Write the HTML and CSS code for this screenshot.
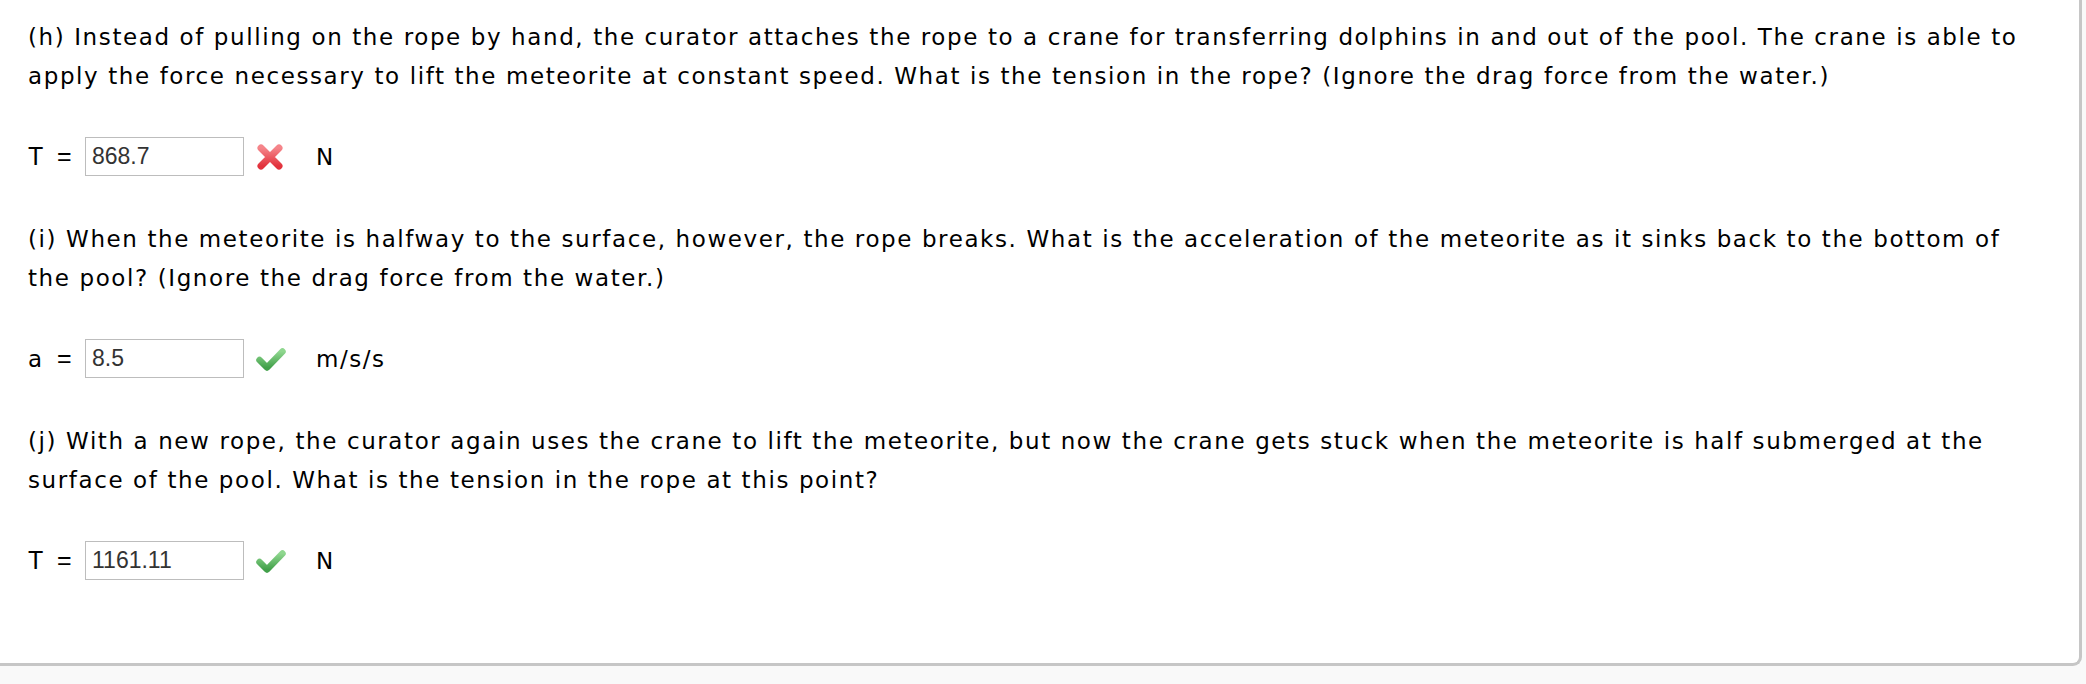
FILE: index.html
```html
<!DOCTYPE html>
<html>
<head>
<meta charset="utf-8">
<link rel="stylesheet" href="styles.css">
</head>
<body>
<div class="card">
  <p class="question">(h) Instead of pulling on the rope by hand, the curator attaches the rope to a crane for transferring dolphins in and out of the pool. The crane is able to apply the force necessary to lift the meteorite at constant speed. What is the tension in the rope? (Ignore the drag force from the water.)</p>
  <div class="answer-row">
    <span class="var">T</span><span class="eq">=</span>
    <span class="field">868.7</span>
    <span class="mark">
      <svg width="30" height="28" viewBox="0 0 30 28">
        <defs>
          <linearGradient id="gx" x1="0" y1="0" x2="0" y2="1">
            <stop offset="0" stop-color="#f5858a"/>
            <stop offset="1" stop-color="#e2323c"/>
          </linearGradient>
        </defs>
        <path d="M6 5 L24 23 M24 5 L6 23" stroke="url(#gx)" stroke-width="7" stroke-linecap="round" fill="none"/>
      </svg>
    </span>
    <span class="unit">N</span>
  </div>

  <p class="question">(i) When the meteorite is halfway to the surface, however, the rope breaks. What is the acceleration of the meteorite as it sinks back to the bottom of the pool? (Ignore the drag force from the water.)</p>
  <div class="answer-row">
    <span class="var var-text">a</span><span class="eq">=</span>
    <span class="field">8.5</span>
    <span class="mark">
      <svg width="32" height="28" viewBox="0 0 32 28">
        <defs>
          <linearGradient id="gc1" x1="0" y1="0" x2="0" y2="1">
            <stop offset="0" stop-color="#8fd78f"/>
            <stop offset="1" stop-color="#42a04a"/>
          </linearGradient>
        </defs>
        <path d="M4.5 15 L12 22.5 L27.5 6.5" stroke="url(#gc1)" stroke-width="6.5" stroke-linecap="round" stroke-linejoin="round" fill="none"/>
      </svg>
    </span>
    <span class="unit">m/s/s</span>
  </div>

  <p class="question">(j) With a new rope, the curator again uses the crane to lift the meteorite, but now the crane gets stuck when the meteorite is half submerged at the surface of the pool. What is the tension in the rope at this point?</p>
  <div class="answer-row last">
    <span class="var">T</span><span class="eq">=</span>
    <span class="field">1161.11</span>
    <span class="mark">
      <svg width="32" height="28" viewBox="0 0 32 28">
        <defs>
          <linearGradient id="gc2" x1="0" y1="0" x2="0" y2="1">
            <stop offset="0" stop-color="#8fd78f"/>
            <stop offset="1" stop-color="#42a04a"/>
          </linearGradient>
        </defs>
        <path d="M4.5 15 L12 22.5 L27.5 6.5" stroke="url(#gc2)" stroke-width="6.5" stroke-linecap="round" stroke-linejoin="round" fill="none"/>
      </svg>
    </span>
    <span class="unit">N</span>
  </div>
</div>
</body>
</html>
```
FILE: styles.css
```css
html, body {
  margin: 0;
  padding: 0;
  background: #f9f9f9;
  overflow: hidden;
}

body {
  font-family: "DejaVu Sans", Verdana, sans-serif;
  font-size: 23px;
  color: #000;
}

.card {
  box-sizing: border-box;
  margin-right: 4px;
  background: #ffffff;
  border-right: 3px solid #c6c6c6;
  border-bottom: 3px solid #c6c6c6;
  border-bottom-right-radius: 9px;
  padding: 18px 46px 83px 28px;
}

.question {
  margin: 0;
  line-height: 39px;
  letter-spacing: 1.6px;
}

.answer-row {
  display: flex;
  align-items: center;
  height: 39px;
  margin: 41px 0 44px 0;
}

.answer-row.last {
  margin-bottom: 0;
}

.var {
  width: 29px;
  font-family: "Liberation Sans", Arial, sans-serif;
  font-size: 25px;
}

.var-text {
  font-family: "DejaVu Sans", Verdana, sans-serif;
  font-size: 23px;
}

.eq {
  width: 28px;
  font-family: "Liberation Sans", Arial, sans-serif;
  font-size: 25px;
}

.field {
  box-sizing: border-box;
  width: 159px;
  height: 39px;
  border: 1px solid #bdbdbd;
  padding: 0 6px;
  display: flex;
  align-items: center;
  font-family: "Liberation Sans", Arial, sans-serif;
  font-size: 23px;
  color: #333;
  background: #fff;
}

.mark {
  width: 32px;
  margin-left: 11px;
  display: flex;
  align-items: center;
}

.mark svg {
  display: block;
}

.unit {
  margin-left: 29px;
  letter-spacing: 1.5px;
}
```
